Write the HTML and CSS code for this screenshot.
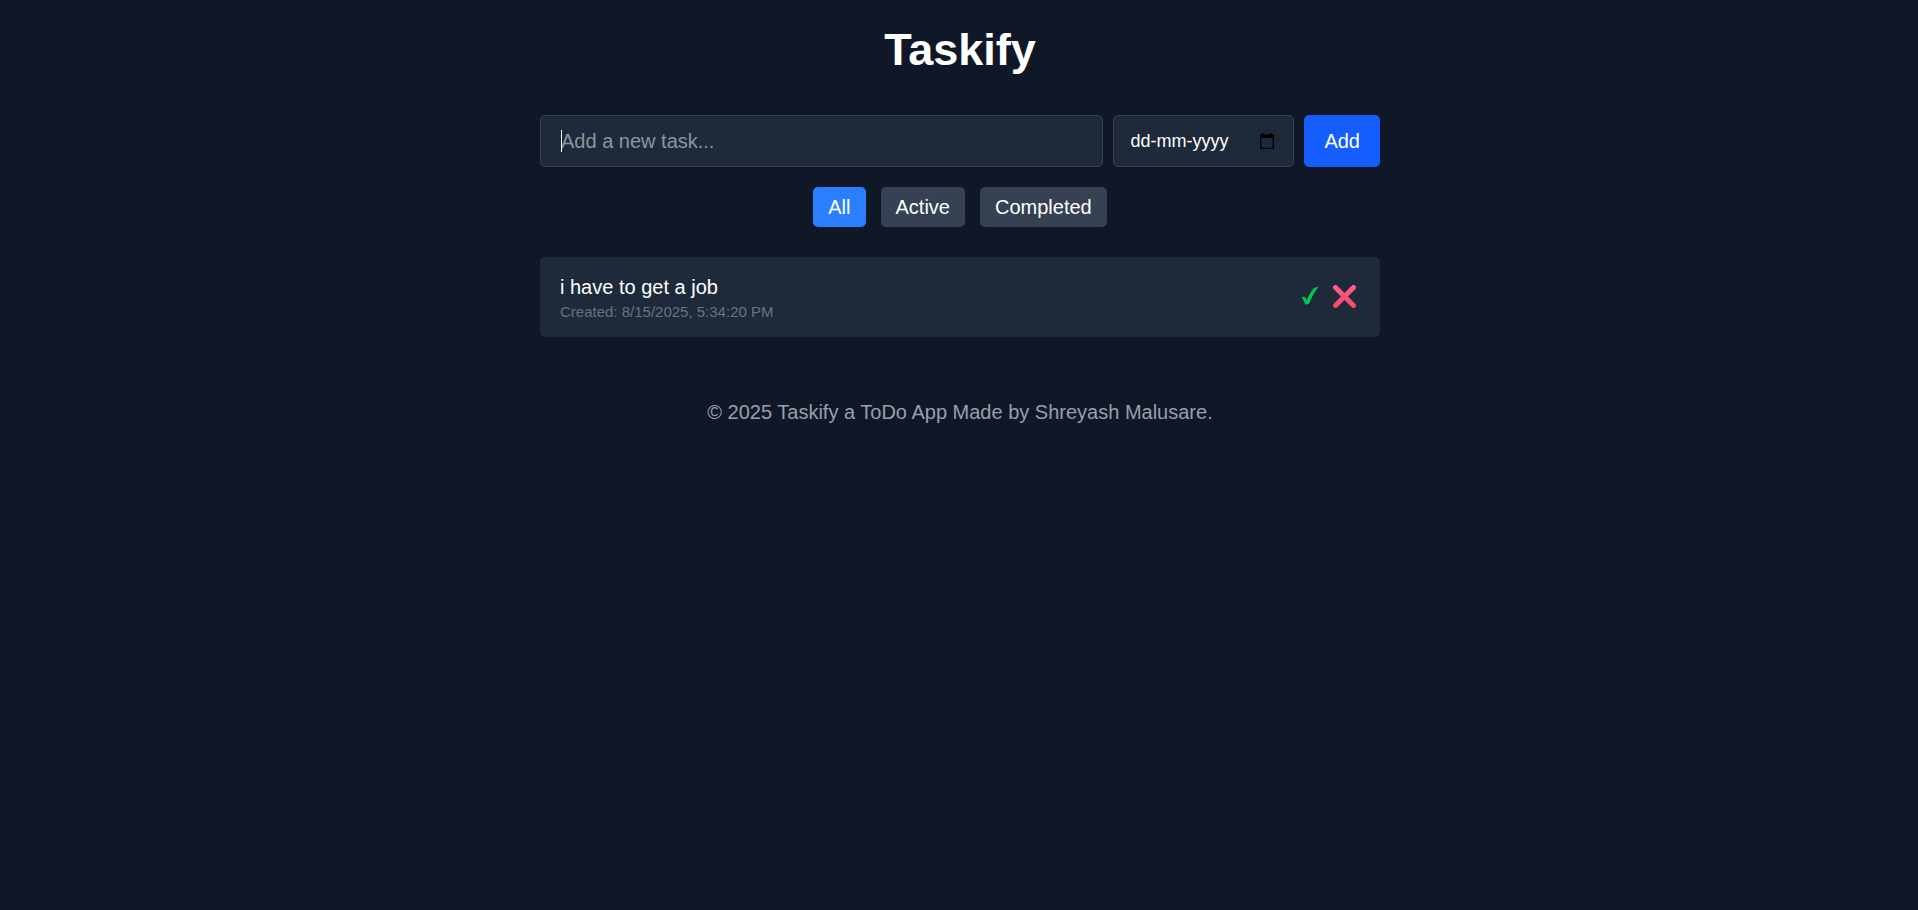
FILE: index.html
```html
<!DOCTYPE html>
<html lang="en">
<head>
<meta charset="utf-8">
<meta name="viewport" content="width=device-width, initial-scale=1">
<title>Taskify</title>
<link rel="stylesheet" href="styles.css">
</head>
<body>
<div class="app">
  <h1 class="title">Taskify</h1>
  <main>
    <form class="task-form">
      <div class="field task-field">
        <input class="input" type="text" placeholder="Add a new task..." aria-label="New task">
        <span class="caret"></span>
      </div>
      <div class="field date-field">
        <input class="date-input" type="text" placeholder="dd-mm-yyyy" aria-label="Due date" size="8">
        <button class="picker" type="button" aria-label="Show date picker">
          <svg class="picker-icon" viewBox="0 0 16 16" aria-hidden="true"><path fill-rule="evenodd" d="M3 0h1.500v1.300h7V0H13v1.300h1q1 0 1 1V15q0 1-1 1H2q-1 0-1-1V2.300q0-1 1-1h1zM2.300 5v9.700h11.400V5z"/></svg>
        </button>
      </div>
      <button class="add" type="submit">Add</button>
    </form>
    <div class="filters">
      <button class="filter filter-on" type="button">All</button>
      <button class="filter" type="button">Active</button>
      <button class="filter" type="button">Completed</button>
    </div>
    <ul class="tasks">
      <li class="task">
        <div>
          <p class="task-name">i have to get a job</p>
          <p class="task-date">Created: 8/15/2025, 5:34:20 PM</p>
        </div>
        <div class="actions">
          <button class="action done" type="button" aria-label="Complete task">
            <svg class="check" viewBox="0 0 18 18" aria-hidden="true"><path fill="#00c950" d="M.5 10.500C2 9.300 3.800 9.500 4.600 11l1.200 2C8 8 10.500 3.500 13.500.8Q14.500 0 17.500 0C13.500 4.500 10.500 10.500 8 16.800q-1.500 1-3.700.7C3.200 14.500 2.200 12 .5 10.500z"/></svg>
          </button>
          <button class="action" type="button" aria-label="Delete task">
            <svg class="cross" viewBox="0 0 23 23" aria-hidden="true"><defs><linearGradient id="red" x1="0" y1="0" x2="0" y2="23" gradientUnits="userSpaceOnUse"><stop stop-color="#ff6090"/><stop offset="1" stop-color="#fb4562"/></linearGradient></defs><path d="M2.500 2.500l18 18M20.500 2.500l-18 18" stroke="url(#red)" stroke-width="5" stroke-linecap="round"/></svg>
          </button>
        </div>
      </li>
    </ul>
  </main>
  <footer class="footer">© 2025 Taskify a ToDo App Made by Shreyash Malusare.</footer>
</div>
</body>
</html>
```
FILE: styles.css
```css
* { box-sizing: border-box; margin: 0; padding: 0; }
body {
  min-height: 100vh;
  background: #101828;
  color: #fff;
  font: 20px/30px "Liberation Sans", Arial, sans-serif;
}
button, input { font: inherit; color: inherit; border: 0; background: none; }
button { cursor: pointer; }
.app { max-width: 882px; margin: 0 auto; padding: 25px 20px 25px 22px; }
.title { font-size: 45px; line-height: 50px; text-align: center; margin-bottom: 40px; }
.task-form { display: flex; gap: 10px; }
.field {
  position: relative;
  display: flex;
  align-items: center;
  background: #1e2939;
  border: 1px solid #364153;
  border-radius: 5px;
}
.task-field { flex: 1; min-width: 0; }
.input { width: 100%; padding: 10px 20px; line-height: 30px; outline: 0; }
.input::placeholder { color: #8f949c; opacity: 1; }
.caret { position: absolute; left: 20px; top: 14px; width: 1px; height: 22px; background: #fff; }
.date-field { width: 181px; padding: 0 16px; justify-content: space-between; }
.date-input { width: 120px; font-size: 18px; outline: 0; }
.date-input::placeholder { color: #fff; opacity: 1; }
.picker { display: flex; padding: 0 2px; }
.picker-icon { width: 16px; height: 16px; fill: #000; }
.add { padding: 11px 20px; background: #155dfc; border-radius: 5px; }
.filters { display: flex; justify-content: center; gap: 15px; margin: 20px 0 30px; }
.filter { padding: 5px 15px; background: #364153; border-radius: 5px; }
.filter-on { background: #2b7fff; }
.tasks { list-style: none; }
.task {
  display: flex;
  justify-content: space-between;
  align-items: center;
  padding: 15px 20px;
  background: #1e2939;
  border-radius: 5px;
}
.task-date { font-size: 15px; line-height: 20px; color: #6a7282; }
.actions { display: flex; align-items: center; gap: 14px; padding: 0 4px 2px 0; }
.action { display: flex; }
.check { width: 18px; height: 18px; }
.cross { width: 23px; height: 23px; fill: none; }
.footer { margin-top: 60px; text-align: center; color: #999fa8; }
```
